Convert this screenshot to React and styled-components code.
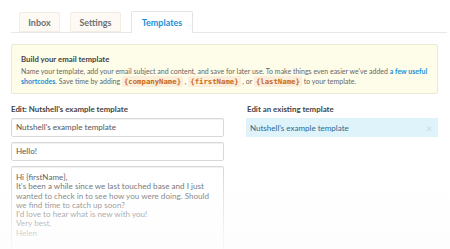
import React from 'react';
import styled, { createGlobalStyle } from 'styled-components';

const TEXT = '#555';
const BLUE = '#1b8fd8';

const GlobalStyle = createGlobalStyle`
  html, body {
    margin: 0;
    background: #fff;
    font-family: Lato, 'Open Sans', sans-serif;
    color: ${TEXT};
  }
`;

const Page = styled.div`
  position: relative;
  width: 450px;
  height: 249px;
  overflow: hidden;
  padding: 11px 12px 0 11px;
  box-sizing: border-box;
`;

const TabBar = styled.div`
  display: flex;
  align-items: flex-end;
  gap: 10px;
  padding-left: 8px;
  height: 21px;
  border-bottom: 1px solid #e8e8e8;
  width: 428px;
`;

const Tab = styled.div`
  display: flex;
  align-items: center;
  justify-content: center;
  box-sizing: border-box;
  width: ${(p) => p.$width}px;
  height: ${(p) => (p.$active ? 22 : 20)}px;
  margin-bottom: ${(p) => (p.$active ? -1 : 0)}px;
  font-size: 9px;
  font-weight: 700;
  color: ${(p) => (p.$active ? BLUE : '#707070')};
  background: ${(p) => (p.$active ? '#fff' : '#fdfaf5')};
  border: 1px solid ${(p) => (p.$active ? '#e4e4e4' : '#f3ede2')};
  border-bottom: ${(p) => (p.$active ? 'none' : '1px solid #f3ede2')};
  border-radius: 2px 2px 0 0;
`;

const Alert = styled.div`
  margin-top: 11px;
  width: 427px;
  box-sizing: border-box;
  padding: 9px 8px 6px 9px;
  background: #fefde9;
  border: 1px solid #ebe9d3;
  border-radius: 2px;
`;

const AlertTitle = styled.div`
  font-size: 7.8px;
  font-weight: 700;
  color: #444;
  line-height: 10px;
  margin-bottom: 2px;
`;

const AlertBody = styled.div`
  font-size: 7px;
  line-height: 10px;
  color: #666;
  white-space: nowrap;
`;

const Link = styled.a`
  color: ${BLUE};
  font-weight: 700;
  text-decoration: none;
`;

const Code = styled.code`
  font-family: 'DejaVu Sans Mono', monospace;
  font-size: 7.3px;
  font-weight: 700;
  color: #c96b1c;
  background: #fbeeda;
  border-radius: 2px;
  padding: 1px 2px;
`;

const Columns = styled.div`
  display: grid;
  grid-template-columns: 213px 192px;
  column-gap: 22px;
  margin-top: 10px;
`;

const Column = styled.div`
  display: flex;
  flex-direction: column;
`;

const Heading = styled.div`
  font-size: 7.9px;
  font-weight: 700;
  color: #444;
  line-height: 10px;
  margin-bottom: 4px;
  padding-left: ${(p) => p.$indent || 0}px;
`;

const Field = styled.div`
  box-sizing: border-box;
  height: ${(p) => p.$height || 19}px;
  padding: ${(p) => (p.$multi ? '6px 4px' : '0 4px')};
  display: ${(p) => (p.$multi ? 'block' : 'flex')};
  align-items: center;
  border: 1px solid #d9d9d9;
  border-radius: 2px;
  box-shadow: inset 0 1px 1px rgba(0, 0, 0, 0.06);
  font-size: 8.1px;
  line-height: 9.3px;
  color: #555;
  background: #fff;

  & + & {
    margin-top: 5px;
  }
`;

const TemplateRow = styled.div`
  display: flex;
  align-items: center;
  justify-content: space-between;
  box-sizing: border-box;
  height: 19px;
  padding: 0 6px 0 4px;
  background: #dff3fb;
  color: #2c6a8c;
  font-size: 8px;
`;

const Close = styled.span`
  color: #c5d9e2;
  font-size: 10px;
`;

const Fade = styled.div`
  position: absolute;
  left: 0;
  right: 0;
  bottom: 0;
  height: 80px;
  background: linear-gradient(rgba(255, 255, 255, 0), rgba(253, 253, 253, 0.9));
  pointer-events: none;
`;

const tabs = [
  { label: 'Inbox', width: 41 },
  { label: 'Settings', width: 51 },
  { label: 'Templates', width: 62, active: true },
];

const App = () => (
  <Page>
    <GlobalStyle />
    <TabBar>
      {tabs.map((t) => (
        <Tab key={t.label} $width={t.width} $active={t.active}>
          {t.label}
        </Tab>
      ))}
    </TabBar>
    <Alert>
      <AlertTitle>Build your email template</AlertTitle>
      <AlertBody>
        Name your template, add your email subject and content, and save for
        later use. To make things even easier we've added{' '}
        <Link href="#">a few useful</Link>
        <br />
        <Link href="#">shortcodes</Link>. Save time by adding{' '}
        <Code>{'{companyName}'}</Code> , <Code>{'{firstName}'}</Code> , or{' '}
        <Code>{'{lastName}'}</Code> to your template.
      </AlertBody>
    </Alert>
    <Columns>
      <Column>
        <Heading>Edit: Nutshell's example template</Heading>
        <Field>Nutshell's example template</Field>
        <Field>Hello!</Field>
        <Field $multi $height={110}>
          Hi {'{firstName}'},
          <br />
          It's been a while since we last touched base and I just wanted to
          check in to see how you were doing. Should we find time to catch up
          soon?
          <br />
          I'd love to hear what is new with you!
          <br />
          Very best,
          <br />
          Helen
        </Field>
      </Column>
      <Column>
        <Heading $indent={1}>Edit an existing template</Heading>
        <TemplateRow>
          Nutshell's example template
          <Close>×</Close>
        </TemplateRow>
      </Column>
    </Columns>
    <Fade />
  </Page>
);

export default App;
